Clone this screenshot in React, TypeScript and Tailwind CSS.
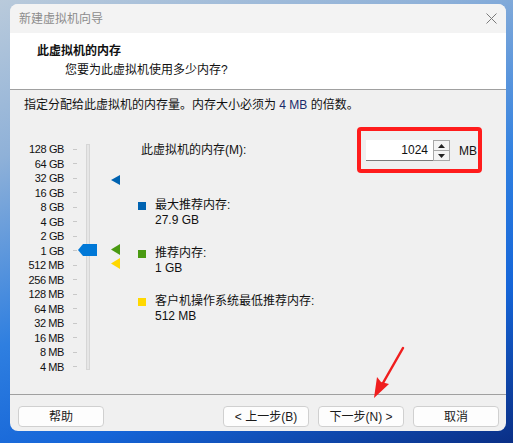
import React from "react";

const scale = [
  "128 GB", "64 GB", "32 GB", "16 GB", "8 GB", "4 GB", "2 GB", "1 GB",
  "512 MB", "256 MB", "128 MB", "64 MB", "32 MB", "16 MB", "8 MB", "4 MB",
];

function Legend({ color, label, value }: { color: string; label: string; value: string }) {
  return (
    <div className="flex items-start gap-[9px] pl-[13px] leading-[15px]">
      <div className={`mt-[4px] h-[8px] w-[8px] ${color}`} />
      <div>
        <div>{label}</div>
        <div>{value}</div>
      </div>
    </div>
  );
}

function Btn({ children }: { children: React.ReactNode }) {
  return (
    <button className="flex h-[21px] w-[86px] items-center justify-center rounded-[4px] border border-[#d0d0d0] bg-[#fdfdfd] text-[12px] text-[#1a1a1a]">
      {children}
    </button>
  );
}

export default function App() {
  return (
    <div className="relative h-[443px] w-[513px] overflow-hidden bg-[linear-gradient(160deg,#b9cadb_0%,#8fb1d8_25%,#2f7fe0_55%,#1565d8_75%,#0a2f86_100%)] pl-[10px] pt-[4px] font-['Liberation_Sans','Noto_Sans_CJK_SC',sans-serif] text-[12px] text-[#111]">
      <div className="flex h-[427px] w-[496px] flex-col overflow-hidden rounded-[8px] bg-[#f0f0f0]">
        {/* title bar */}
        <div className="flex h-[29px] items-center justify-between bg-[#f3f3f3] pl-[9px] pr-[9px]">
          <span className="text-[#8c8c8c]">新建虚拟机向导</span>
          <svg width="11" height="11" viewBox="0 0 11 11">
            <path d="M0.5 0.5 L10.5 10.5 M10.5 0.5 L0.5 10.5" stroke="#7a7a7a" strokeWidth="1" />
          </svg>
        </div>

        {/* header */}
        <div className="h-[57px] border-b border-[#a0a0a0] bg-white pt-[9px] leading-[18px]">
          <div className="pl-[27px] font-bold">此虚拟机的内存</div>
          <div className="mt-[1px] pl-[55px]">您要为此虚拟机使用多少内存?</div>
        </div>

        {/* body */}
        <div className="flex h-[305px] flex-col border-b border-[#a0a0a0]">
          <div className="pl-[14px] pt-[7px] leading-[16px]">
            指定分配给此虚拟机的内存量。内存大小必须为 <span className="text-[#1a2a6a]">4 MB</span> 的倍数。
          </div>

          <div className="mt-[14px] flex">
            {/* slider */}
            <div className="relative flex w-[115px] pt-[15px]">
              <div className="flex w-[54px] flex-col text-right text-[11px] leading-[14.5px] tracking-[-0.4px]">
                {scale.map((s) => (
                  <div key={s} className="h-[14.5px]">{s}</div>
                ))}
              </div>
              <div className="ml-[9px] flex w-[4px] flex-col">
                {scale.map((s) => (
                  <div key={s} className="flex h-[14.5px] items-center">
                    <div className="h-px w-[4px] bg-[#c8c8c8]" />
                  </div>
                ))}
              </div>
              <div className="ml-[9px] mt-[2px] h-[226px] w-[4px] border border-[#d6d6d6] bg-[#e6e6e6]" />
              {/* thumb */}
              <svg className="absolute left-[68px] top-[117px]" width="20" height="12" viewBox="0 0 20 12">
                <path d="M0 6 L5 0 H19 V12 H5 Z" fill="#0078d7" />
              </svg>
              {/* markers */}
              <svg className="absolute left-[101px] top-[48px]" width="9" height="10" viewBox="0 0 9 10">
                <path d="M0 5 L9 0 V10 Z" fill="#0063b1" />
              </svg>
              <svg className="absolute left-[101px] top-[117px]" width="9" height="11" viewBox="0 0 9 11">
                <path d="M0 5.5 L9 0 V11 Z" fill="#4a9a12" />
              </svg>
              <svg className="absolute left-[101px] top-[131px]" width="9" height="11" viewBox="0 0 9 11">
                <path d="M0 5.5 L9 0 V11 Z" fill="#ffd800" />
              </svg>
            </div>

            {/* right side */}
            <div className="flex flex-1 flex-col">
              <div className="flex items-center justify-between pl-[16px] pr-[24px]">
                <span className="mt-[-1px]">此虚拟机的内存(M):</span>
                <div className="flex h-[46px] w-[125px] items-center rounded-[4px] border-[4px] border-[#ff1c1c] pl-[5px] pt-[1px]">
                  <div className="flex h-[21px] w-[67px] items-center justify-end border-b border-[#7a7a7a] bg-white pr-[5px]">
                    1024
                  </div>
                  <div className="flex h-[21px] w-[17px] flex-col border border-[#a8a8a8] bg-[#f4f4f4]">
                    <div className="flex flex-1 items-center justify-center border-b border-[#a8a8a8]">
                      <svg width="7" height="4" viewBox="0 0 7 4"><path d="M3.5 0 L7 4 H0 Z" fill="#222" /></svg>
                    </div>
                    <div className="flex flex-1 items-center justify-center">
                      <svg width="7" height="4" viewBox="0 0 7 4"><path d="M0 0 H7 L3.5 4 Z" fill="#222" /></svg>
                    </div>
                  </div>
                  <span className="ml-[9px]">MB</span>
                </div>
              </div>

              <div className="mt-[25px] flex flex-col gap-[18px]">
                <Legend color="bg-[#0063b1]" label="最大推荐内存:" value="27.9 GB" />
                <Legend color="bg-[#4a9a12]" label="推荐内存:" value="1 GB" />
                <Legend color="bg-[#ffd800]" label="客户机操作系统最低推荐内存:" value="512 MB" />
              </div>
            </div>
          </div>
        </div>

        {/* footer */}
        <div className="flex items-center pl-[8px] pr-[7px] pt-[11px]">
          <Btn>帮助</Btn>
          <div className="ml-auto flex gap-[9px]">
            <Btn>&lt; 上一步(B)</Btn>
            <Btn>下一步(N) &gt;</Btn>
          </div>
          <div className="ml-[9px]">
            <Btn>取消</Btn>
          </div>
        </div>
      </div>

      {/* annotation arrow */}
      <svg className="pointer-events-none absolute left-0 top-0" width="513" height="443" viewBox="0 0 513 443">
        <path d="M403 348 L383 383" stroke="#f01e1e" strokeWidth="2.5" strokeLinecap="round" />
        <path d="M374 398 L377 377 L381 382 L389 384 Z" fill="#f01e1e" />
      </svg>
    </div>
  );
}
